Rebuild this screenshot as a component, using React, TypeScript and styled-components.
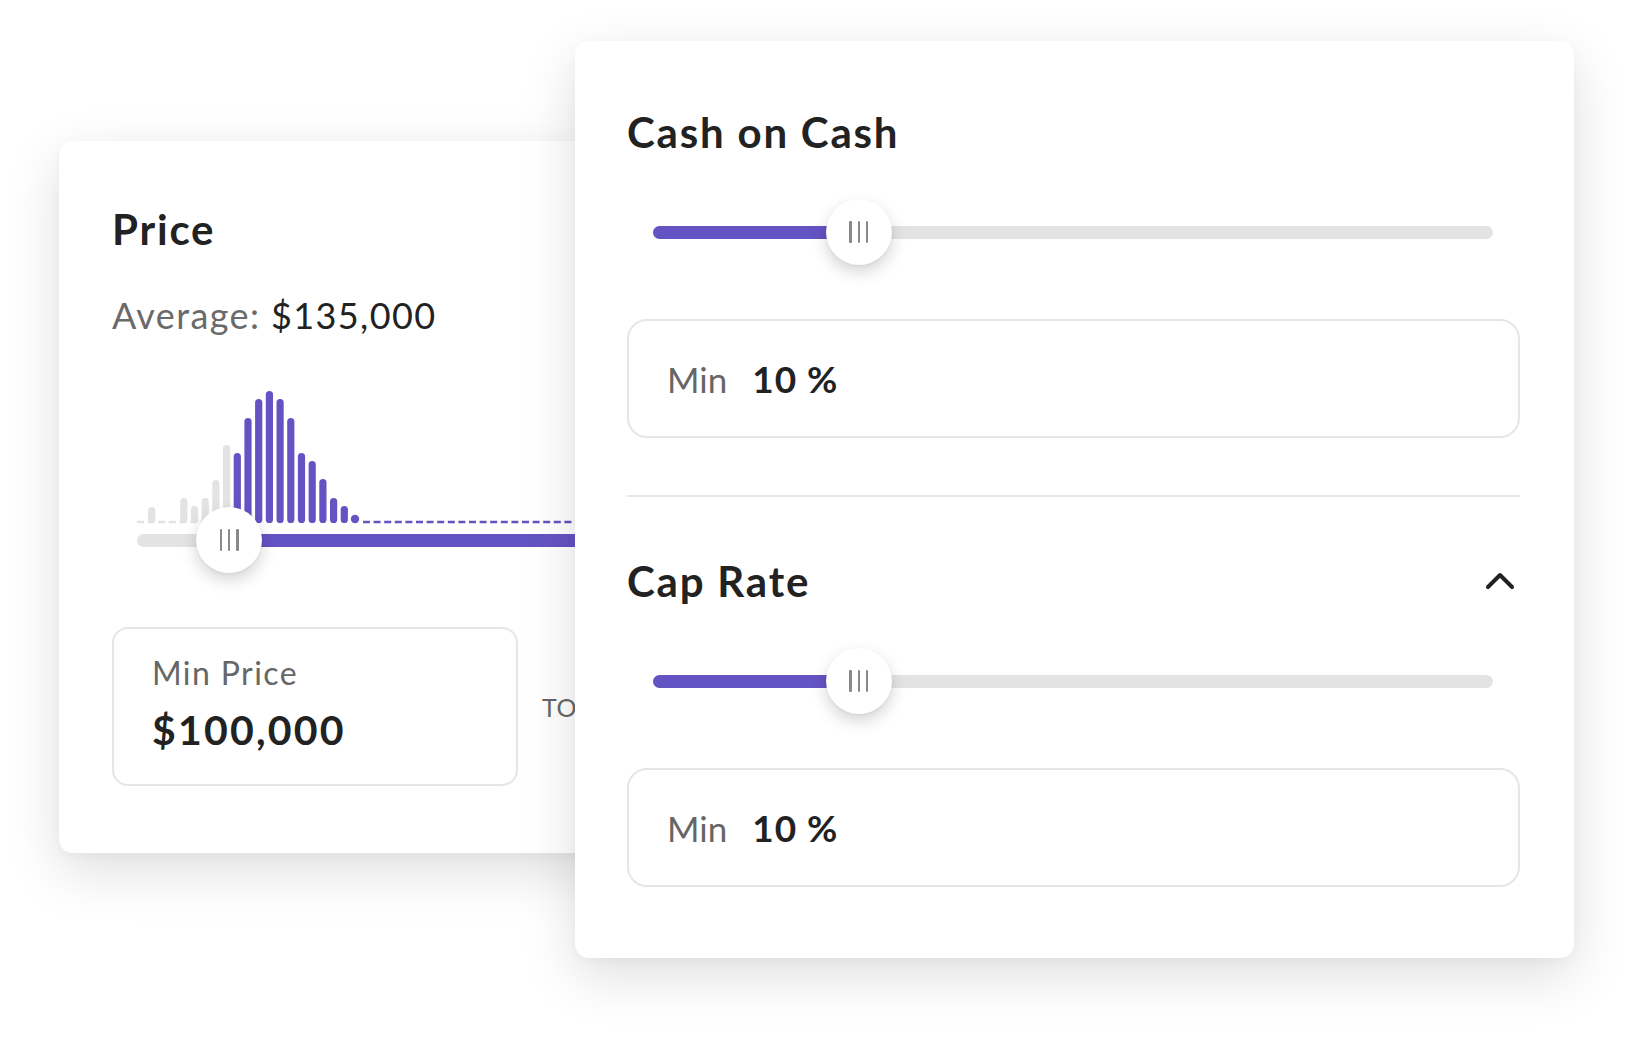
import styled, { createGlobalStyle } from 'styled-components'

const PURPLE = '#6453c3'
const TRACK = '#e3e3e3'

const GlobalStyle = createGlobalStyle`
  html, body {
    margin: 0;
    padding: 0;
    background: #ffffff;
  }
  body {
    font-family: Lato, "Open Sans", sans-serif;
    color: #222222;
  }
`

// heights of each histogram column, 0 = empty slot (dash only)
const bars = [0, 16, 0, 0, 25, 17, 25, 43, 78, 70, 105, 124, 132, 124, 105, 70, 62, 44, 25, 17, 9]
const firstActive = 9
const slot = 10.7
const baseY = 143

const Histogram = () => (
  <ChartSvg width={470} height={145} viewBox="0 0 470 145">
    <line x1={0} y1={baseY - 1} x2={92} y2={baseY - 1} stroke={TRACK} strokeWidth={2.5} strokeDasharray="7 3.6" />
    <line x1={226} y1={baseY - 1} x2={470} y2={baseY - 1} stroke={PURPLE} strokeWidth={2.5} strokeDasharray="7 3.6" />
    {bars.map((h, i) => {
      if (!h) return null
      const cx = 4 + i * slot
      const color = i >= firstActive ? PURPLE : TRACK
      if (h < 10) return <circle key={i} cx={cx} cy={baseY - 4} r={4.2} fill={color} />
      return <rect key={i} x={cx - 3.6} y={baseY - h} width={7.2} height={h} rx={3.6} fill={color} />
    })}
  </ChartSvg>
)

interface SliderProps {
  value: number
  width: number
  fillRight?: boolean
}

const RangeSlider = ({ value, width, fillRight }: SliderProps) => (
  <SliderRow style={{ width }}>
    <Track>
      <Fill $right={!!fillRight} style={fillRight ? { left: `${value}%` } : { width: `${value}%` }} />
    </Track>
    <Thumb style={{ left: `${value}%` }}>
      <Grip />
      <Grip />
      <Grip />
    </Thumb>
  </SliderRow>
)

const Chevron = () => (
  <svg width="30" height="18" viewBox="0 0 30 18">
    <polyline points="3,15 15,3 27,15" fill="none" stroke="#222" strokeWidth="4" strokeLinecap="round" strokeLinejoin="round" />
  </svg>
)

interface SectionProps {
  title: string
  value: string
  collapsible?: boolean
}

const FilterSection = ({ title, value, collapsible }: SectionProps) => (
  <Section>
    <SectionHead>
      <Title>{title}</Title>
      {collapsible && <Chevron />}
    </SectionHead>
    <SliderArea>
      <RangeSlider value={24.5} width={840} />
    </SliderArea>
    <MinBox>
      <MinLabel>Min</MinLabel>
      <MinValue>{value}</MinValue>
    </MinBox>
  </Section>
)

export default function App() {
  return (
    <>
      <GlobalStyle />
      <Stage>
        <PriceCard>
          <Title>Price</Title>
          <Average>
            Average: <strong>$135,000</strong>
          </Average>
          <ChartArea>
            <Histogram />
            <RangeSlider value={19.2} width={480} fillRight />
          </ChartArea>
          <PriceRow>
            <PriceBox>
              <PriceLabel>Min Price</PriceLabel>
              <PriceValue>$100,000</PriceValue>
            </PriceBox>
            <ToText>TO</ToText>
          </PriceRow>
        </PriceCard>
        <ReturnsCard>
          <FilterSection title="Cash on Cash" value="10 %" />
          <Divider />
          <FilterSection title="Cap Rate" value="10 %" collapsible />
        </ReturnsCard>
      </Stage>
    </>
  )
}

const Stage = styled.div`
  display: flex;
  align-items: flex-start;
  padding: 41px 0 79px 59px;
  width: 1634px;
  height: 1038px;
  box-sizing: border-box;
  overflow: hidden;
`

const Card = styled.div`
  background: #ffffff;
  border-radius: 14px;
  box-shadow: 0 18px 55px rgba(0, 0, 0, 0.13), 0 4px 12px rgba(0, 0, 0, 0.03);
  box-sizing: border-box;
  flex-shrink: 0;
`

const PriceCard = styled(Card)`
  width: 560px;
  margin-top: 100px;
  padding: 67px 0 67px 53px;
`

const ReturnsCard = styled(Card)`
  position: relative;
  z-index: 1;
  width: 999px;
  margin-left: -44px;
  padding: 70px 54px 71px 52px;
`

const Title = styled.h2`
  margin: 0;
  font-size: 42px;
  line-height: 1;
  font-weight: 700;
  color: #222222;
  letter-spacing: 1.8px;
`

const Average = styled.div`
  margin-top: 47px;
  font-size: 36px;
  line-height: 1;
  color: #6a6a6a;
  letter-spacing: 1.4px;
  strong {
    font-weight: 400;
    color: #222222;
  }
`

const ChartArea = styled.div`
  margin: 47px 0 0 25px;
  display: flex;
  flex-direction: column;
`

const ChartSvg = styled.svg`
  display: block;
`

const SliderRow = styled.div`
  position: relative;
  height: 30px;
  display: flex;
  align-items: center;
`

const Track = styled.div`
  position: relative;
  width: 100%;
  height: 13px;
  border-radius: 7px;
  background: ${TRACK};
  overflow: hidden;
`

const Fill = styled.div<{ $right: boolean }>`
  position: absolute;
  top: 0;
  bottom: 0;
  left: 0;
  right: ${p => (p.$right ? '0' : 'auto')};
  background: ${PURPLE};
`

const Thumb = styled.div`
  position: absolute;
  top: 50%;
  width: 66px;
  height: 66px;
  border-radius: 50%;
  background: #ffffff;
  transform: translate(-50%, -50%);
  box-shadow: 0 7px 16px rgba(0, 0, 0, 0.17), 0 1px 3px rgba(0, 0, 0, 0.05);
  display: flex;
  align-items: center;
  justify-content: center;
  gap: 5.5px;
`

const Grip = styled.span`
  width: 2.6px;
  height: 22px;
  border-radius: 1px;
  background: #8a8a8a;
`

const PriceRow = styled.div`
  margin-top: 72px;
  display: flex;
  align-items: center;
  gap: 24px;
`

const PriceBox = styled.div`
  width: 406px;
  height: 159px;
  box-sizing: border-box;
  border: 2px solid #e6e6e6;
  border-radius: 16px;
  padding: 28px 0 0 38px;
`

const PriceLabel = styled.div`
  font-size: 32px;
  line-height: 1;
  color: #666666;
  letter-spacing: 1.4px;
`

const PriceValue = styled.div`
  margin-top: 20px;
  font-size: 41px;
  line-height: 1;
  font-weight: 700;
  color: #222222;
  letter-spacing: 2.2px;
`

const ToText = styled.span`
  font-size: 25px;
  color: #666666;
  letter-spacing: 0.5px;
`

const Section = styled.section`
  display: flex;
  flex-direction: column;
`

const SectionHead = styled.div`
  display: flex;
  align-items: center;
  justify-content: space-between;
  padding-right: 5px;
`

const SliderArea = styled.div`
  margin-top: 64px;
  padding-left: 26px;
`

const MinBox = styled.div`
  margin-top: 72px;
  height: 119px;
  box-sizing: border-box;
  border: 2px solid #e6e6e6;
  border-radius: 20px;
  display: flex;
  align-items: center;
  gap: 25px;
  padding-left: 38px;
`

const MinLabel = styled.span`
  font-size: 35px;
  color: #666666;
`

const MinValue = styled.span`
  font-size: 37px;
  font-weight: 700;
  color: #222222;
  letter-spacing: 1px;
`

const Divider = styled.hr`
  margin: 57px 0 63px;
  border: none;
  height: 2px;
  background: #e8e8e8;
`
